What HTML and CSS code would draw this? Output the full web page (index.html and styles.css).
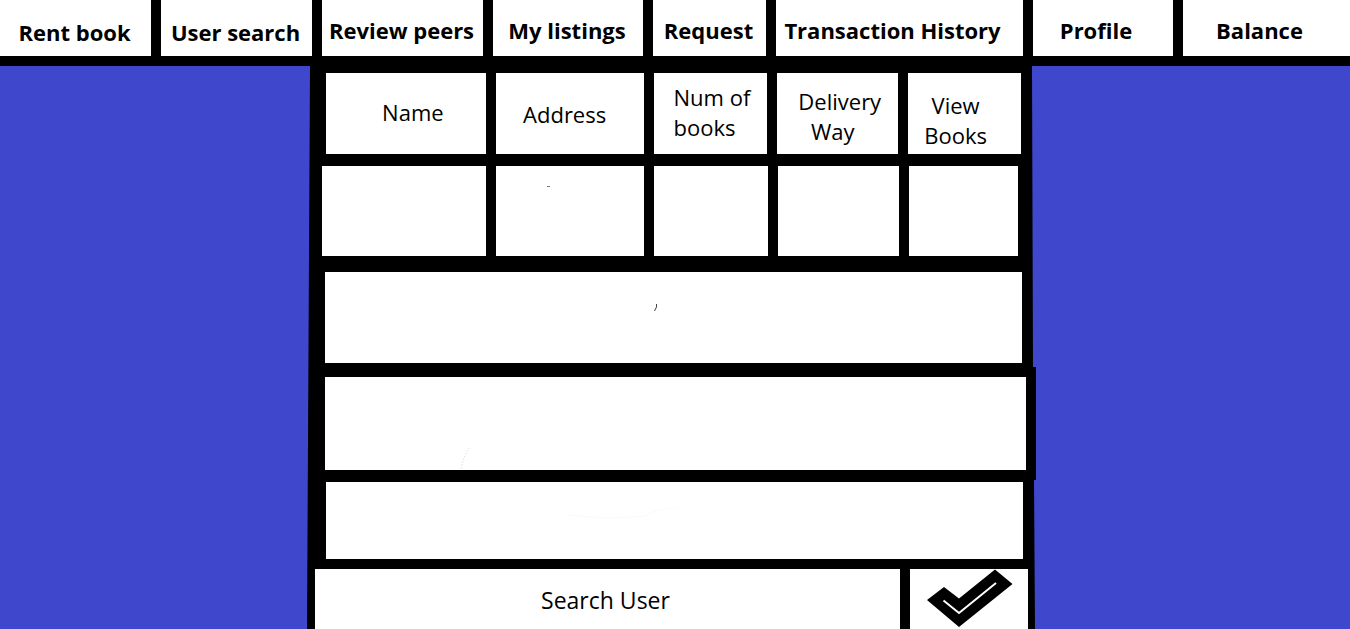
FILE: index.html
```html
<!DOCTYPE html>
<html lang="en">
<head>
<meta charset="utf-8">
<meta name="viewport" content="width=device-width, initial-scale=1">
<title>User search</title>
<link rel="stylesheet" href="styles.css">
</head>
<body>
<nav class="nav">
  <a class="nav-link nav-low" href="#">Rent book</a>
  <a class="nav-link nav-low" href="#">User search</a>
  <a class="nav-link" href="#">Review peers</a>
  <a class="nav-link" href="#">My listings</a>
  <a class="nav-link" href="#">Request</a>
  <a class="nav-link nav-left" href="#">Transaction History</a>
  <a class="nav-link nav-left" href="#">Profile</a>
  <a class="nav-link nav-left" href="#">Balance</a>
</nav>
<main class="main">
  <section class="panel">
    <table class="users">
      <thead>
        <tr class="row row-head">
          <th class="cell name" scope="col">Name</th>
          <th class="cell address" scope="col">Address</th>
          <th class="cell count" scope="col">Num of<br>books</th>
          <th class="cell delivery" scope="col"><span>Delivery<br><span class="way">Way</span></span></th>
          <th class="cell view" scope="col">View<br>Books</th>
        </tr>
      </thead>
      <tbody>
        <tr class="row row-first">
          <td class="cell"></td>
          <td class="cell"><svg class="mark" viewBox="0 0 148 90" aria-hidden="true"><path d="M51 20.500h3" stroke="#777"/></svg></td>
          <td class="cell"></td>
          <td class="cell"></td>
          <td class="cell"></td>
        </tr>
        <tr class="row row-second">
          <td class="cell" colspan="5"><svg class="mark" viewBox="0 0 697 91" aria-hidden="true"><path d="M331.500 32v3l-2 4" fill="none" stroke="#444"/></svg></td>
        </tr>
        <tr class="row row-third">
          <td class="cell" colspan="5"><svg class="mark" viewBox="0 0 701 93" aria-hidden="true"><path d="M144 71q-6 9-8 21" fill="none" stroke="#ccc" stroke-dasharray="1 2"/></svg></td>
        </tr>
        <tr class="row row-fourth">
          <td class="cell" colspan="5"><svg class="mark" viewBox="0 0 697 77" aria-hidden="true"><path d="M242 33q40 5 76 1l12-5 22-4" fill="none" stroke="#fafafa"/></svg></td>
        </tr>
      </tbody>
    </table>
    <form class="search">
      <input class="search-input" type="text" placeholder="Search User" aria-label="Search User">
      <button class="search-button" type="button" aria-label="Confirm search">
        <svg class="check" viewBox="0 0 86 58" aria-hidden="true">
          <path d="M0 31 17 18 32 29.500 68 0.500 85.500 15 32 58Z" fill="#000"/>
          <path d="M16.500 31.500 32 44 69 14" fill="none" stroke="#fff" stroke-width="2"/>
        </svg>
      </button>
    </form>
  </section>
</main>
</body>
</html>
```
FILE: styles.css
```css
* {
  box-sizing: border-box;
}

body {
  margin: 0;
  min-height: 100vh;
  display: flex;
  flex-direction: column;
  background: #3f47cc;
  color: #000;
  font-family: "Open Sans", "Noto Sans", sans-serif;
  font-size: 22px;
  line-height: 30px;
}

.nav {
  display: grid;
  grid-template-columns: 151fr 151fr 161fr 150fr 113fr 247fr 140fr 167fr;
  gap: 10px;
  background: #000;
  border-bottom: 10px solid #000;
}

.nav-link {
  min-width: 0;
  padding: 15px 2px 11px 0;
  background: #fff;
  color: #000;
  font-weight: 700;
  text-align: center;
  text-decoration: none;
  white-space: nowrap;
}

.nav-low {
  padding: 17px 2px 9px 0;
}

.nav-left {
  padding-right: 14px;
}

.main {
  flex: 1;
  display: grid;
  grid-template-columns: 307fr 729fr 314fr;
}

.panel {
  grid-column: 2;
  min-width: 0;
  display: flex;
  flex-direction: column;
  background: #000;
  clip-path: polygon(3px 0, calc(100% - 4px) 0, calc(100% - 3px) 301px, 100% 301px, 100% 414px, calc(100% - 2px) 414px, calc(100% - 1px) 100%, 0 100%);
}

.users,
.users thead,
.users tbody {
  display: block;
}

.row {
  display: grid;
  grid-template-columns: 100%;
}

.row-head,
.row-first {
  gap: 10px;
}

.row-head {
  grid-template-columns: 160fr 148fr 114fr 121fr 113fr;
  min-height: 100px;
  padding: 7px 15px 12px 19px;
}

.row-first {
  grid-template-columns: 164fr 148fr 114fr 121fr 109fr;
  min-height: 106px;
  padding: 0 18px 16px 15px;
}

.row-second {
  min-height: 105px;
  padding: 0 14px 14px 18px;
}

.row-third {
  min-height: 105px;
  padding: 0 10px 12px 18px;
}

.row-fourth {
  min-height: 87px;
  padding: 0 13px 10px 19px;
}

.cell {
  position: relative;
  min-width: 0;
  padding: 0;
  display: flex;
  align-items: center;
  justify-content: center;
  background: #fff;
  font-weight: 400;
}

.row-head .cell {
  padding-bottom: 4px;
}

.name {
  padding-left: 14px;
}

.address {
  padding-top: 4px;
  padding-right: 10px;
}

.count {
  justify-content: flex-start;
  padding-left: 20px;
  text-align: left;
}

.delivery {
  padding-top: 8px;
  padding-left: 4px;
}

.way {
  padding-right: 14px;
}

.view {
  padding-top: 16px;
  padding-right: 18px;
}

.mark {
  position: absolute;
  inset: 0;
  width: 100%;
  height: 100%;
}

.search {
  flex: 1;
  min-height: 60px;
  display: grid;
  grid-template-columns: 585fr 118fr;
  gap: 10px;
  padding: 0 8px;
}

.search-input,
.search-button {
  min-width: 0;
  margin: 0;
  border: 0;
  border-radius: 0;
  background: #fff;
  color: #000;
}

.search-input {
  padding: 2px 4px 0 0;
  font-family: "Open Sans", "Noto Sans", sans-serif;
  font-size: 23px;
  text-align: center;
}

.search-input::placeholder {
  color: #000;
  opacity: 1;
}

.search-button {
  display: flex;
  align-items: center;
  justify-content: center;
  padding: 0 0 2px 2px;
}

.check {
  width: 86px;
  height: 58px;
}
```
